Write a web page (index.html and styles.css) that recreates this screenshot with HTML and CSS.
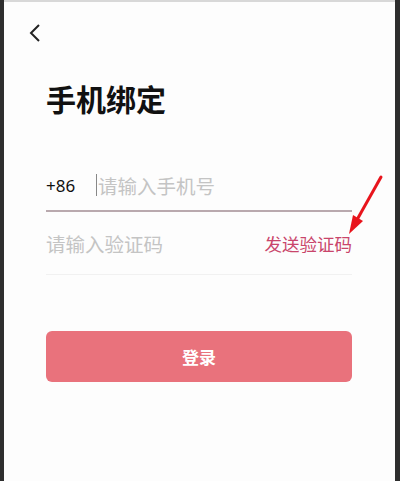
FILE: index.html
```html
<!DOCTYPE html>
<html lang="zh">
<head>
<meta charset="utf-8">
<link rel="stylesheet" href="styles.css">
</head>
<body>
<div class="screen">
  <div class="topbar">
    <svg class="back" width="14" height="20" viewBox="0 0 14 20"><path d="M11 2 L3 10 L11 18" fill="none" stroke="#222" stroke-width="2"/></svg>
  </div>
  <h1 class="title">手机绑定</h1>
  <div class="form">
    <div class="row phone">
      <span class="code">+86</span>
      <span class="cursor"></span>
      <span class="ph">请输入手机号</span>
    </div>
    <div class="row verify">
      <span class="ph">请输入验证码</span>
      <span class="send">发送验证码</span>
    </div>
    <button class="login">登录</button>
  </div>
  <svg class="arrow" width="50" height="80" viewBox="0 0 50 80">
    <path d="M38 11 L15 52" stroke="#e8141c" stroke-width="3" fill="none" stroke-linecap="round"/>
    <path d="M6 68 L10 49 L20 55 Z" fill="#e8141c"/>
  </svg>
</div>
</body>
</html>
```
FILE: styles.css
```css
html, body { margin: 0; padding: 0; }
body {
  width: 400px;
  height: 481px;
  background: #2e2e2e;
  font-family: "Noto Sans CJK SC", "Noto Sans", sans-serif;
  overflow: hidden;
}
.screen {
  position: relative;
  box-sizing: border-box;
  margin-left: 4px;
  width: 391px;
  height: 481px;
  background: #fdfdfd;
  border-top: 2px solid #d8d8d8;
  padding: 0 43px 0 42px;
}
.topbar {
  height: 58px;
  display: flex;
  align-items: flex-end;
}
.back {
  margin-left: -18px;
  margin-bottom: 17px;
}
.title {
  margin: 18px 0 0 0;
  font-size: 30px;
  line-height: 40px;
  font-weight: 700;
  color: #111;
}
.form { margin-top: 42px; }
.row {
  display: flex;
  align-items: center;
  box-sizing: border-box;
}
.phone {
  height: 52px;
  border-bottom: 2px solid #b9a9ae;
}
.code {
  font-family: "Noto Sans", sans-serif;
  font-size: 17px;
  color: #111;
  width: 50px;
}
.cursor {
  width: 1px;
  height: 22px;
  background: #888;
  margin-right: 1px;
}
.ph {
  font-size: 19.5px;
  color: #c4c4c4;
}
.verify {
  height: 63px;
  justify-content: space-between;
  border-bottom: 1px solid #f1f1f1;
}
.send {
  font-size: 17.5px;
  color: #c9456b;
}
.login {
  display: block;
  width: 100%;
  height: 51px;
  margin-top: 56px;
  border: none;
  border-radius: 6px;
  background: #e9727c;
  color: #fff;
  font-family: "Noto Sans CJK SC", sans-serif;
  font-size: 17px;
  font-weight: 700;
}
.arrow {
  position: absolute;
  left: 339px;
  top: 164px;
}
```
